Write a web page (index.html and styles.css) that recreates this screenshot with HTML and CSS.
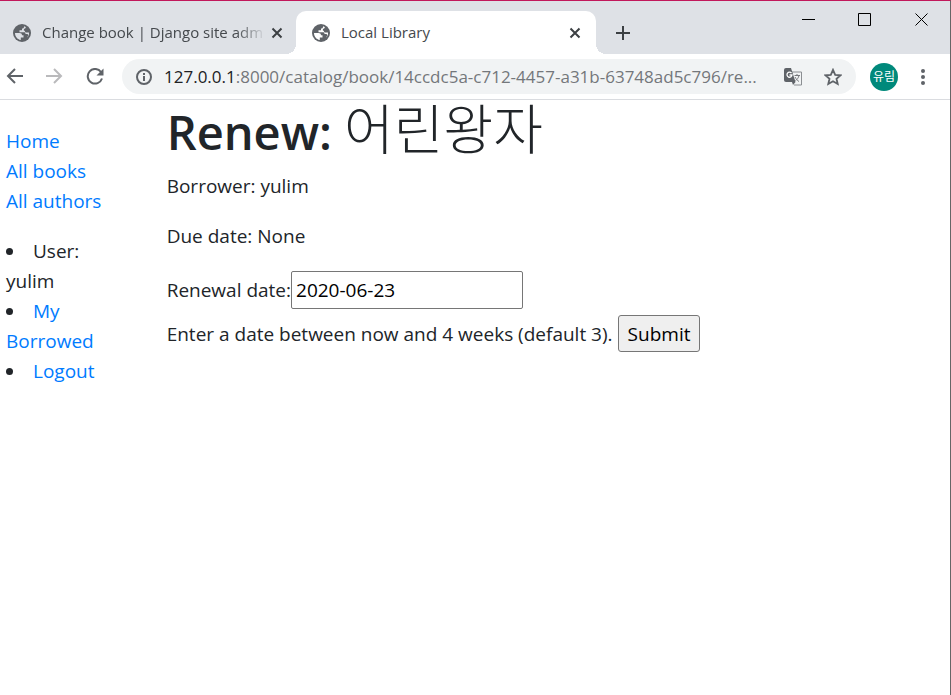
FILE: index.html
```html
<!DOCTYPE html>
<html lang="en">
<head>
<meta charset="utf-8">
<title>Local Library</title>
<link rel="stylesheet" href="styles.css">
</head>
<body>
<svg class="defs" aria-hidden="true">
  <symbol id="globe" viewBox="0 0 18 18">
    <circle cx="9" cy="9" r="9" fill="#5f6368"/>
    <path fill="currentColor" d="M2 9h4.500c1.600 0 2.500.9 2.500 2.200H10.500v2.300H7.800V16C4.300 15.300 2 12.500 2 9z"/>
    <path fill="currentColor" d="M11 2.300c.2 1.600-.5 2.300-2 2.300v1.600H6.500v2H11c1 0 1.500.6 1.500 1.900h1.400c.8 0 1.400.5 1.400 1.500l-1.300 2C15.500 12.500 16.200 11 16 8.500h-2.500c-1.200 0-1.600-.8-1.600-1.800h-1V4.800c1.300 0 1.900-.8 1.900-1.800z"/>
  </symbol>
  <symbol id="cross" viewBox="0 0 12 12"><path d="M1.500 1.500l9 9m0-9l-9 9" fill="none" stroke="#3c4043" stroke-width="2"/></symbol>
</svg>
<header class="browser">
  <div class="tabs">
    <div class="tab">
      <svg class="favicon"><use href="#globe"/></svg>
      <span class="tab-title fade">Change book | Django site adm</span>
      <button class="icon-button" aria-label="Close tab"><svg class="cross"><use href="#cross"/></svg></button>
    </div>
    <div class="tab active">
      <svg class="favicon"><use href="#globe"/></svg>
      <span class="tab-title">Local Library</span>
      <button class="icon-button" aria-label="Close tab"><svg class="cross"><use href="#cross"/></svg></button>
    </div>
    <button class="icon-button new-tab" aria-label="New tab"><svg width="16" height="16"><path d="M8 1v14M1 8h14" stroke="#3c4043" stroke-width="2"/></svg></button>
    <div class="window-controls">
      <button class="icon-button" aria-label="Minimize"><svg width="14" height="14"><path d="M1 6.500h13" stroke="#000"/></svg></button>
      <button class="icon-button" aria-label="Maximize"><svg width="14" height="14"><path d="M.5 .5h12v12H.5z" fill="none" stroke="#000"/></svg></button>
      <button class="icon-button" aria-label="Close"><svg width="14" height="14"><path d="M.5 .5l12 12m0-12l-12 12" stroke="#000"/></svg></button>
    </div>
  </div>
  <div class="toolbar">
    <button class="icon-button" aria-label="Back"><svg width="18" height="18"><path d="M17 8H2m7-7L2 8l7 7" fill="none" stroke="#5f6368" stroke-width="2"/></svg></button>
    <button class="icon-button" aria-label="Forward"><svg width="18" height="18"><path d="M0 8h15M8 1l7 7-7 7" fill="none" stroke="#bababc" stroke-width="2"/></svg></button>
    <button class="icon-button" aria-label="Reload"><svg width="18" height="18"><path d="M15 4A7.300 7.300 0 1 0 16 10.500" fill="none" stroke="#5f6368" stroke-width="2"/><path d="M17.500 .5v7h-7z" fill="#5f6368"/></svg></button>
    <div class="omnibox">
      <svg width="16" height="16"><circle cx="8" cy="8" r="7" fill="none" stroke="#5f6368" stroke-width="2"/><path d="M8 7v5M8 4v2" stroke="#5f6368" stroke-width="2"/></svg>
      <span class="url"><b>127.0.0.1</b>:8000/catalog/book/14ccdc5a-c712-4457-a31b-63748ad5c796/re...</span>
      <button class="icon-button" aria-label="Translate"><svg width="18" height="18"><path d="M8 4h9.500v13H10" fill="#f1f3f4" stroke="#8b8e92"/><path d="M0 2a2 2 0 0 1 2-2h5l4.500 14H2a2 2 0 0 1-2-2z" fill="#5f6368"/><path d="M7.500 5.200A2.500 2.500 0 1 0 8 7H5.500" fill="none" stroke="#fff" stroke-width="1.300"/><path d="M10.500 7.500H16M13 6v1.500M15 7.500c-.5 2.500-2 4-3.500 5M11 9c1 2 2.500 3.500 4 4.500" fill="none" stroke="#77797d"/><path d="M8 14h3.500L9 17z" fill="#5f6368"/></svg></button>
      <button class="icon-button" aria-label="Bookmark"><svg width="18" height="18"><path d="M9 1.800l2.200 5 5.300.5-4 3.500 1.200 5.200L9 13.200 4.300 16l1.200-5.200-4-3.500 5.300-.5z" fill="none" stroke="#5f6368" stroke-width="1.800"/></svg></button>
    </div>
    <button class="avatar">유림</button>
    <button class="icon-button" aria-label="Menu"><svg width="6" height="18"><g fill="#5f6368"><circle cx="3" cy="3" r="2"/><circle cx="3" cy="9" r="2"/><circle cx="3" cy="15" r="2"/></g></svg></button>
  </div>
</header>
<div class="page">
  <nav class="sidebar">
    <ul class="links">
      <li><a href="#">Home</a></li>
      <li><a href="#">All books</a></li>
      <li><a href="#">All authors</a></li>
    </ul>
    <ul class="user">
      <li>User: yulim</li>
      <li><a href="#">My Borrowed</a></li>
      <li><a href="#">Logout</a></li>
    </ul>
  </nav>
  <main>
    <h1>Renew: <span>어린왕자</span></h1>
    <p>Borrower: yulim</p>
    <p>Due date: None</p>
    <form>
      <div class="field"><label for="renewal">Renewal date:</label><input id="renewal" type="text" value="2020-06-23"></div>
      <div class="field help"><span>Enter a date between now and 4 weeks (default 3).</span><button type="button" class="submit">Submit</button></div>
    </form>
  </main>
</div>
</body>
</html>
```

FILE: styles.css
```css
* { box-sizing: border-box; }

body {
  display: flex;
  flex-direction: column;
  min-height: 100vh;
  margin: 0;
  border-top: 1px solid #c2185b;
  border-right: 1px solid #666;
  background: #fff;
  color: #212529;
  font: 19px/30px "Open Sans", "Noto Sans CJK KR", sans-serif;
}

svg { display: block; flex: none; }
.defs { position: absolute; width: 0; height: 0; }
button { font: inherit; }
a { color: #007bff; text-decoration: none; }

.icon-button {
  display: grid;
  place-items: center;
  flex: none;
  padding: 0;
  border: 0;
  background: none;
}

.tabs {
  display: flex;
  align-items: flex-end;
  height: 53px;
  background: #dee1e6;
}

.tab {
  display: flex;
  align-items: center;
  gap: 11px;
  flex: 0 1 300px;
  min-width: 0;
  height: 43px;
  padding: 0 15px 0 16px;
  font-size: 15px;
  color: #45494d;
}
.tab:first-child { flex-basis: 296px; gap: 11px; padding: 0 13px; }

.tab.active {
  position: relative;
  border-radius: 10px 10px 0 0;
  background: #fff;
}
.tab.active::before,
.tab.active::after {
  content: "";
  position: absolute;
  bottom: 0;
  width: 10px;
  height: 10px;
}
.tab.active::before { right: 100%; background: radial-gradient(circle at 0 0, transparent 10px, #fff 10px); }
.tab.active::after { left: 100%; background: radial-gradient(circle at 100% 0, transparent 10px, #fff 10px); }

.favicon { width: 18px; height: 18px; color: #dee1e6; }
.active .favicon { color: #fff; }
.cross { width: 12px; height: 12px; }
.tab-title { flex: 1; overflow: hidden; white-space: nowrap; line-height: 32px; padding-bottom: 2px; }
.fade { margin-right: -6px; mask-image: linear-gradient(to left, transparent, #000 30px); }
.new-tab { width: 54px; height: 43px; }

.window-controls {
  display: flex;
  align-self: flex-start;
  margin-left: auto;
}
.window-controls .icon-button { width: 57px; height: 38px; }

.toolbar {
  display: flex;
  align-items: center;
  gap: 22px;
  height: 46px;
  padding: 0 24px 0 6px;
  border-bottom: 1px solid #dadce0;
}

.omnibox {
  display: flex;
  align-items: center;
  gap: 22px;
  flex: 1;
  min-width: 0;
  height: 35px;
  margin: 0 -8px 0 -4px;
  padding: 0 14px;
  border-radius: 18px;
  background: #f1f3f4;
}
.url {
  flex: 1;
  margin-left: -10px;
  overflow: hidden;
  white-space: nowrap;
  font-size: 17px;
  color: #74777b;
}
.url b { font-weight: 400; color: #202124; }

.avatar {
  flex: none;
  width: 28px;
  height: 28px;
  padding: 0;
  border: 0;
  border-radius: 50%;
  background: #00897b;
  color: #fff;
  font-size: 12px;
  line-height: 28px;
}

.page {
  display: grid;
  grid-template-columns: 1fr 5fr;
  gap: 8px;
  padding: 0 20px 0 6px;
}
.sidebar { max-width: 120px; padding-top: 26px; }
ul { margin: 0 0 20px; padding: 0; list-style: none; }
.user { max-width: 100px; list-style: disc inside; }

h1 { margin: 0 0 10px; font-size: 47px; line-height: 58px; font-weight: 600; }
h1 span { font-weight: 300; font-size: 54px; }
p { margin: 0 0 20px; }

.field { display: flex; align-items: center; }
.field input {
  width: 232px;
  height: 38px;
  padding: 1px 4px;
  border: 1px solid #767676;
  border-radius: 2px;
  font: inherit;
  color: #000;
}
.help { gap: 5px; margin-top: 6px; }
.submit {
  height: 37px;
  padding: 0 9px;
  border: 1px solid #767676;
  border-radius: 3px;
  background: #efefef;
  color: #000;
}
```
